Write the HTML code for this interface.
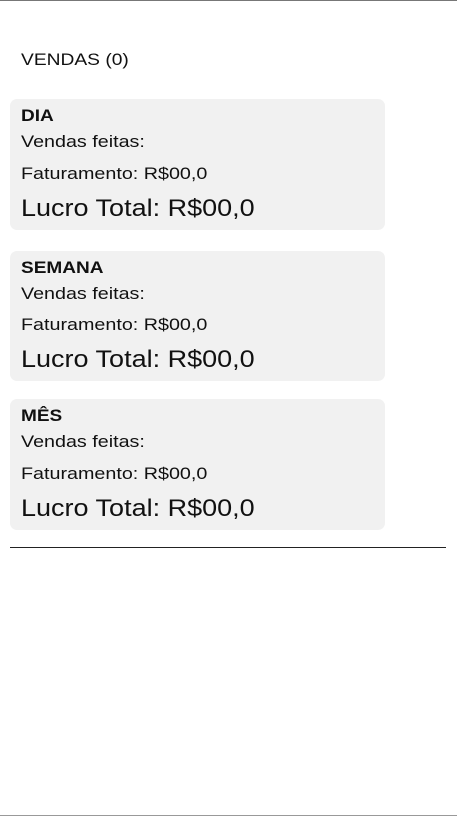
<!DOCTYPE html><html><head><style>
body{margin:0;width:457px;height:816px;background:#fff;position:relative;font-family:"Liberation Sans",sans-serif;color:#111;overflow:hidden}
.t{position:absolute;left:21px;white-space:nowrap;transform-origin:0 0;transform:scaleX(1.16)}
.c{position:absolute;left:10px;width:375px;background:#f1f1f1;border-radius:7px}
.l{transform:scaleX(1.125)}
</style></head><body>
<div style="position:absolute;top:0;left:0;width:457px;height:1px;background:#777"></div>
<div class="t" style="top:50px;font-size:17px;transform:scaleX(1.13)">VENDAS (0)</div>
<div class="c" style="top:99px;height:131px"></div>
<div class="c" style="top:251px;height:130px"></div>
<div class="c" style="top:399px;height:131px"></div>
<div class="t" style="top:106px;font-size:17px;font-weight:bold;transform:scaleX(1.12)">DIA</div>
<div class="t" style="top:132px;font-size:17px">Vendas feitas:</div>
<div class="t" style="top:164px;font-size:17px">Faturamento: R$00,0</div>
<div class="t l" style="top:195px;font-size:24px">Lucro Total: R$00,0</div>
<div class="t" style="top:258px;font-size:17px;font-weight:bold;transform:scaleX(1.12)">SEMANA</div>
<div class="t" style="top:284px;font-size:17px">Vendas feitas:</div>
<div class="t" style="top:315px;font-size:17px">Faturamento: R$00,0</div>
<div class="t l" style="top:346px;font-size:24px">Lucro Total: R$00,0</div>
<div class="t" style="top:406px;font-size:17px;font-weight:bold;transform:scaleX(1.12)">MÊS</div>
<div class="t" style="top:432px;font-size:17px">Vendas feitas:</div>
<div class="t" style="top:464px;font-size:17px">Faturamento: R$00,0</div>
<div class="t l" style="top:495px;font-size:24px">Lucro Total: R$00,0</div>
<div style="position:absolute;top:547px;left:10px;width:436px;height:1px;background:#222"></div>
<div style="position:absolute;top:815px;left:0;width:457px;height:1px;background:#999"></div>
</body></html>
